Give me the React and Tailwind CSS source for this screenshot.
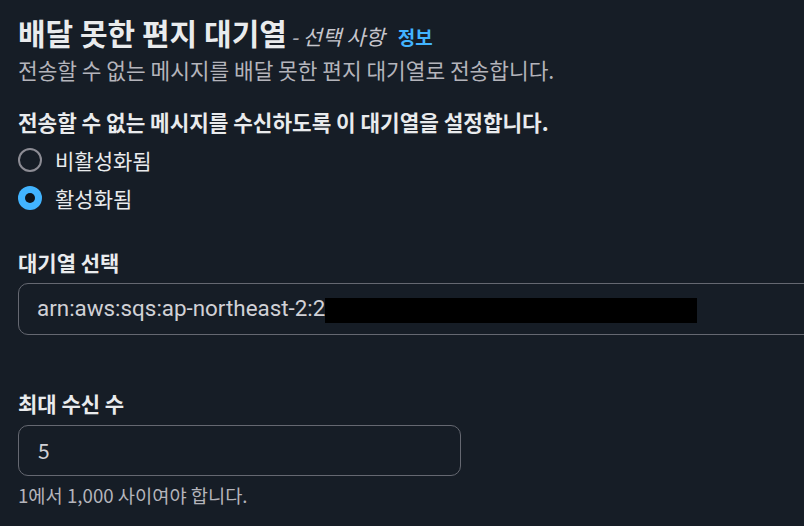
export default function App() {
  const font = { fontFamily: '"Noto Sans CJK KR", "Noto Sans", sans-serif' };
  const latin = { fontFamily: 'Roboto, "Noto Sans CJK KR", sans-serif' };
  return (
    <div className="w-[804px] h-[526px] overflow-hidden bg-[#161d26] text-[#e9ebed] pl-[18px] pt-[14px]" style={font}>
      <div className="flex items-baseline h-[36px] leading-[36px]">
        <span className="text-[30px] font-bold text-[#e9ebed]">배달 못한 편지 대기열</span>
        <span className="ml-[4px] text-[21px] italic text-[#c6c6cd]">- 선택 사항</span>
        <span className="ml-[13px] text-[19px] font-bold text-[#42b4ff]">정보</span>
      </div>
      <div className="mt-[6px] h-[28px] leading-[28px] text-[21.4px] text-[#b4b4bb] whitespace-nowrap">
        전송할 수 없는 메시지를 배달 못한 편지 대기열로 전송합니다.
      </div>
      <div className="mt-[24px] h-[28px] leading-[28px] text-[21.3px] font-bold text-[#e9ebed] whitespace-nowrap">
        전송할 수 없는 메시지를 수신하도록 이 대기열을 설정합니다.
      </div>
      <div className="mt-[10px] flex items-center h-[28px]">
        <span className="w-[24px] h-[24px] rounded-full border-2 border-[#8c8c94] box-border"></span>
        <span className="ml-[13px] text-[21px] leading-[28px] text-[#e9ebed]">비활성화됨</span>
      </div>
      <div className="mt-[10px] flex items-center h-[28px]">
        <span className="w-[24px] h-[24px] rounded-full bg-[#42b4ff] flex items-center justify-center">
          <span className="w-[10px] h-[10px] rounded-full bg-[#0f141a]"></span>
        </span>
        <span className="ml-[13px] text-[21px] leading-[28px] text-[#e9ebed]">활성화됨</span>
      </div>
      <div className="mt-[36px] h-[28px] leading-[28px] text-[21px] font-bold text-[#e9ebed]">
        대기열 선택
      </div>
      <div className="mt-[7px] w-[900px] h-[52px] rounded-[10px] border border-[#656871] flex items-center pl-[18px] text-[22.4px] text-[#d1d1d6]" style={latin}>
        <span>arn:aws:sqs:ap-northeast-2:2</span>
        <span className="inline-block w-[372px] h-[25px] bg-black mt-[2px]"></span>
      </div>
      <div className="mt-[54px] h-[28px] leading-[28px] text-[21px] font-bold text-[#e9ebed]">
        최대 수신 수
      </div>
      <div className="mt-[8px] w-[443px] h-[51px] rounded-[10px] border border-[#656871] flex items-center pl-[19px] text-[21px] text-[#d1d1d6]">
        5
      </div>
      <div className="mt-[8px] h-[22px] leading-[22px] text-[18.7px] text-[#b4b4bb]">
        1에서 1,000 사이여야 합니다.
      </div>
    </div>
  );
}
